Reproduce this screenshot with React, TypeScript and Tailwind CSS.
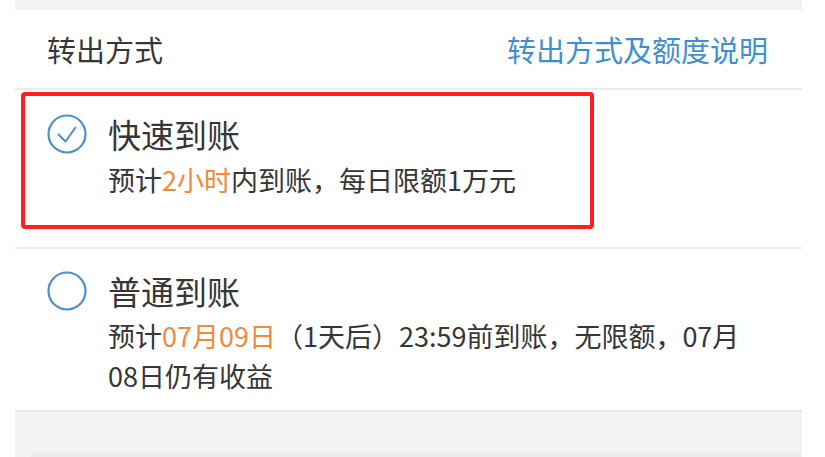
const font = { fontFamily: '"Noto Sans CJK SC", "Noto Sans", sans-serif' };

function CheckCircle({ checked }: { checked: boolean }) {
  return (
    <svg width="40" height="40" viewBox="0 0 40 40" className="shrink-0">
      <circle cx="20" cy="20" r="18.5" fill="none" stroke="#4b8fcb" strokeWidth="2.2" />
      {checked ? (
        <path d="M11.5 20.5 L18.5 27.5 L28.5 13.5" fill="none" stroke="#4b8fcb" strokeWidth="2" strokeLinecap="round" strokeLinejoin="round" />
      ) : null}
    </svg>
  );
}

export default function App() {
  return (
    <div className="flex h-[457px] w-[825px] overflow-hidden bg-white text-[#363636]" style={font}>
      <div className="ml-[15px] flex w-[787px] flex-col bg-[#f3f3f3] pt-[10px]">
        <div className="bg-white">
          {/* Header */}
          <div className="flex h-[80px] items-center justify-between border-b-2 border-[#ebebeb] pl-[32px] pr-[34px]">
            <span className="text-[29px] leading-none">转出方式</span>
            <span className="text-[29px] leading-none text-[#3f8fce]">转出方式及额度说明</span>
          </div>

          {/* Fast transfer */}
          <div className="border-b-2 border-[#ebebeb] pb-[18px] pl-[6px] pt-[2px]">
            <div className="flex h-[137px] w-[573px] items-start gap-[21px] rounded-[4px] border-4 border-[#fe1f1f] pl-[22px] pt-[18px]">
              <CheckCircle checked />
              <div className="flex flex-col">
                <span className="text-[33px] leading-[40px]">快速到账</span>
                <span className="mt-[6px] text-[27px] leading-[40px]">
                  预计<span className="text-[#f0893d]">2小时</span>内到账，每日限额1万元
                </span>
              </div>
            </div>
          </div>

          {/* Normal transfer */}
          <div className="flex items-start gap-[21px] border-b-2 border-[#e8e8e8] pb-[14px] pl-[32px] pt-[22px]">
            <CheckCircle checked={false} />
            <div className="flex flex-col">
              <span className="text-[33px] leading-[40px]">普通到账</span>
              <span className="mt-[5px] text-[27px] leading-[40px]">
                预计<span className="text-[#f0893d]">07月09日</span>（1天后）23:59前到账，无限额，07月
                <br />
                08日仍有收益
              </span>
            </div>
          </div>
        </div>
        <div className="mt-auto ml-[15px] h-[4px] rounded-t-[6px] bg-[#ececec]" />
      </div>
    </div>
  );
}
